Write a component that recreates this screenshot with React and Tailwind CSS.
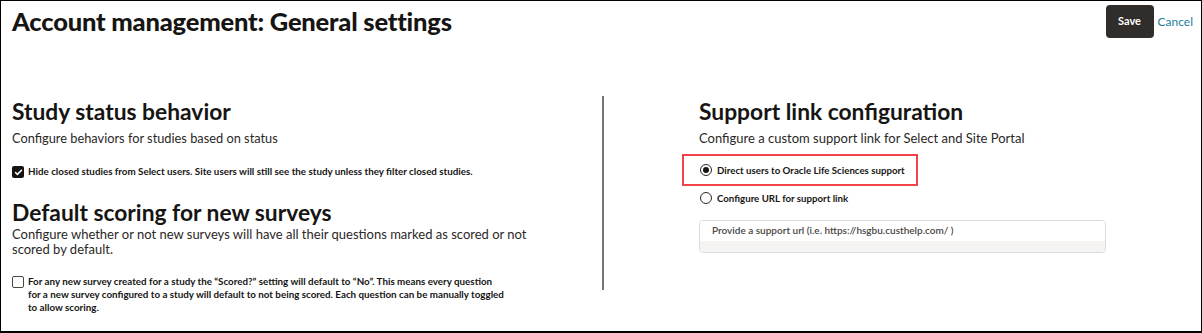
import { Check } from 'lucide-react'

const FONT = { fontFamily: 'Lato, "Noto Sans", sans-serif' }

function Checkbox({ checked }) {
  return checked ? (
    <span className="mt-[1px] flex h-[12px] w-[12px] flex-shrink-0 items-center justify-center rounded-[2px] bg-[#161513]">
      <Check size={9} strokeWidth={4} className="text-white" />
    </span>
  ) : (
    <span className="mt-[1px] h-[12px] w-[12px] flex-shrink-0 rounded-[2px] border border-[#4a4643] bg-white" />
  )
}

function Radio({ checked }) {
  return (
    <span className="flex h-[12px] w-[12px] flex-shrink-0 items-center justify-center rounded-full border border-[#2b2826] bg-white">
      {checked && <span className="h-[6px] w-[6px] rounded-full bg-[#161513]" />}
    </span>
  )
}

export default function App() {
  return (
    <div
      className="h-[333px] w-[1202px] overflow-hidden border border-b-2 border-black bg-white text-[#161513]"
      style={FONT}
    >
      {/* Header */}
      <div className="flex items-start justify-between pl-[11px] pr-[8px] pt-[3px]">
        <h1 className="text-[25.5px] font-black leading-[34px] tracking-[-0.2px]">
          Account management: General settings
        </h1>
        <div className="flex items-center gap-[4px] pt-[1px]">
          <button className="h-[33px] w-[48px] rounded-[4px] bg-[#312d2a] text-[11px] font-bold text-white">
            Save
          </button>
          <span className="text-[12px] text-[#227e9e]">Cancel</span>
        </div>
      </div>

      {/* Body */}
      <div className="mt-[58px] flex">
        {/* Left column */}
        <div className="w-[601px] pl-[11px]">
          <h2 className="text-[22.8px] font-bold leading-[30px]">Study status behavior</h2>
          <p className="mt-[4px] text-[12.8px] leading-[16px] text-[#2b2826]">
            Configure behaviors for studies based on status
          </p>
          <label className="mt-[19px] flex gap-[4px]">
            <Checkbox checked />
            <span className="text-[9.8px] font-bold leading-[13px]">
              Hide closed studies from Select users. Site users will still see the study unless they filter closed studies.
            </span>
          </label>
          <h2 className="mt-[19px] text-[22.8px] font-bold leading-[30px]">Default scoring for new surveys</h2>
          <p className="text-[13px] leading-[15px] text-[#2b2826]">
            Configure whether or not new surveys will have all their questions marked as scored or not
            <br />
            scored by default.
          </p>
          <label className="mt-[18px] flex gap-[4px]">
            <Checkbox />
            <span className="text-[9.8px] font-bold leading-[13px]">
              For any new survey created for a study the “Scored?” setting will default to “No”. This means every question
              <br />
              for a new survey configured to a study will default to not being scored. Each question can be manually toggled
              <br />
              to allow scoring.
            </span>
          </label>
        </div>

        {/* Divider */}
        <div className="h-[194px] w-[2px] bg-[#7a7570]" />

        {/* Right column */}
        <div className="pl-[95px]">
          <h2 className="text-[22.8px] font-bold leading-[30px]">Support link configuration</h2>
          <p className="mt-[4px] text-[13px] leading-[16px] text-[#2b2826]">
            Configure a custom support link for Select and Site Portal
          </p>
          <div className="ml-[-17px] mt-[8px] flex h-[32px] w-[236px] items-center gap-[5px] border-2 border-[#f2444b] pl-[16px]">
            <Radio checked />
            <span className="text-[9.7px] font-bold">Direct users to Oracle Life Sciences support</span>
          </div>
          <div className="mt-[5px] flex items-center gap-[5px] pl-[1px]">
            <Radio />
            <span className="text-[9.7px] font-bold">Configure URL for support link</span>
          </div>
          <div className="mt-[14px] flex h-[33px] w-[407px] flex-col overflow-hidden rounded-[4px] border border-[#dcdad8]">
            <div className="flex h-[20px] items-center bg-white pl-[12px] text-[10px] font-semibold text-[#4a4643]">
              Provide a support url (i.e. https://hsgbu.custhelp.com/ )
            </div>
            <div className="flex-1 bg-[#f5f4f2]" />
          </div>
        </div>
      </div>
    </div>
  )
}
